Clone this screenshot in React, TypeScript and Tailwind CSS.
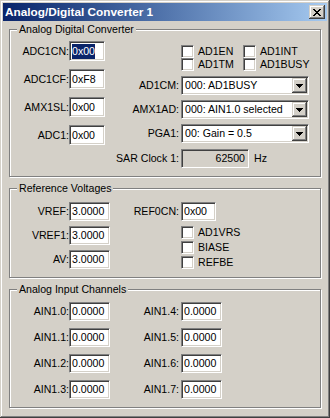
import React from "react";

const sunken =
  "border border-t-[#808080] border-l-[#808080] border-r-white border-b-white shadow-[inset_1px_1px_0_#404040,inset_-1px_-1px_0_#d4d0c8]";
const raised =
  "shadow-[inset_-1px_-1px_0_#404040,inset_1px_1px_0_#d4d0c8,inset_-2px_-2px_0_#808080,inset_2px_2px_0_#ffffff]";

function Field({
  size,
  value,
  selected,
}: {
  size: string;
  value: string;
  selected?: boolean;
}) {
  return (
    <div className={`${sunken} ${size} bg-white flex items-center pl-[2px] overflow-hidden whitespace-nowrap`}>
      {selected ? (
        <span className="bg-[#0a246a] text-white leading-[15px]">{value}</span>
      ) : (
        <span>{value}</span>
      )}
    </div>
  );
}

function Check({ label, width }: { label: string; width?: string }) {
  return (
    <div className={`flex items-center gap-[4px] h-[13px] ${width ?? ""}`}>
      <div className={`${sunken} w-[13px] h-[13px] bg-white shrink-0`} />
      <span className="whitespace-nowrap">{label}</span>
    </div>
  );
}

function Select({ value }: { value: string }) {
  return (
    <div className={`${sunken} w-[128px] h-[19px] bg-white flex items-stretch p-[1px]`}>
      <div className="flex-1 flex items-center pl-[2px] whitespace-nowrap overflow-hidden">{value}</div>
      <div className={`${raised} w-[15px] bg-[#d4d0c8] flex items-center justify-center`}>
        <svg width="7" height="4" viewBox="0 0 7 4" shapeRendering="crispEdges">
          <path d="M0 0h7v1H0zM1 1h5v1H1zM2 2h3v1H2zM3 3h1v1H3z" fill="#000" />
        </svg>
      </div>
    </div>
  );
}

function Group({
  title,
  className,
  children,
}: {
  title: string;
  className: string;
  children: React.ReactNode;
}) {
  return (
    <div
      className={`relative w-[312px] border border-[#808080] shadow-[inset_1px_1px_0_#ffffff,1px_1px_0_#ffffff] ${className}`}
    >
      <span className="absolute left-[7px] top-[-7px] px-[2px] bg-[#d4d0c8] leading-[13px] whitespace-nowrap">
        {title}
      </span>
      {children}
    </div>
  );
}

function LRow({
  label,
  children,
  h,
}: {
  label: string;
  children: React.ReactNode;
  h: string;
}) {
  return (
    <div className={`flex items-center ${h}`}>
      <div className="w-[59px] text-right whitespace-nowrap">{label}</div>
      {children}
    </div>
  );
}

function RRow({
  label,
  children,
  h,
}: {
  label: string;
  children: React.ReactNode;
  h: string;
}) {
  return (
    <div className={`flex items-center ${h}`}>
      <div className="w-[69px] text-right whitespace-nowrap mr-[2px]">{label}</div>
      {children}
    </div>
  );
}

export default function App() {
  return (
    <div className="w-[330px] h-[418px] bg-[#d4d0c8] p-[3px] shadow-[inset_-1px_-1px_0_#404040,inset_1px_1px_0_#d4d0c8,inset_-2px_-2px_0_#808080,inset_2px_2px_0_#ffffff] font-['Liberation_Sans',Arial,sans-serif] text-[10.6px] text-black leading-[13px]">
      <div className="h-[18px] bg-linear-to-r from-[#0a246a] to-[#a6caf0] flex items-center justify-between pl-[2px] pr-[2px]">
        <span className="text-white font-bold text-[11.8px] whitespace-nowrap">Analog/Digital Converter 1</span>
        <div className={`${raised} w-[16px] h-[14px] bg-[#d4d0c8] flex items-center justify-center`}>
          <svg width="8" height="7" viewBox="0 0 8 7" shapeRendering="crispEdges">
            <path
              d="M0 0h2v1H0zM6 0h2v1H6zM1 1h2v1H1zM5 1h2v1H5zM2 2h4v1H2zM3 3h2v1H3zM2 4h4v1H2zM1 5h2v1H1zM5 5h2v1H5zM0 6h2v1H0zM6 6h2v1H6z"
              fill="#000"
            />
          </svg>
        </div>
      </div>

      <div className="pl-[6px] pt-[8px] flex flex-col gap-[11px]">
        <Group title="Analog Digital Converter" className="h-[148px]">
          <div className="flex">
            <div className="w-[100px] flex flex-col gap-[8px] pt-[11px]">
              <LRow label="ADC1CN:" h="h-[20px]">
                <Field size="w-[36px] h-[20px]" value="0x00" selected />
              </LRow>
              <LRow label="ADC1CF:" h="h-[20px]">
                <Field size="w-[36px] h-[20px]" value="0xF8" />
              </LRow>
              <LRow label="AMX1SL:" h="h-[20px]">
                <Field size="w-[36px] h-[20px]" value="0x00" />
              </LRow>
              <LRow label="ADC1:" h="h-[20px]">
                <Field size="w-[36px] h-[20px]" value="0x00" />
              </LRow>
            </div>
            <div className="flex flex-col pt-[15px]">
              <div className="flex pl-[71px]">
                <Check label="AD1EN" width="w-[62px]" />
                <Check label="AD1INT" />
              </div>
              <div className="flex pl-[71px]">
                <Check label="AD1TM" width="w-[62px]" />
                <Check label="AD1BUSY" />
              </div>
              <div className="flex flex-col gap-[5px] mt-[5px]">
                <RRow label="AD1CM:" h="h-[19px]">
                  <Select value="000: AD1BUSY" />
                </RRow>
                <RRow label="AMX1AD:" h="h-[19px]">
                  <Select value="000: AIN1.0 selected" />
                </RRow>
                <RRow label="PGA1:" h="h-[19px]">
                  <Select value="00: Gain = 0.5" />
                </RRow>
              </div>
              <div className="mt-[6px]">
                <RRow label="SAR Clock 1:" h="h-[19px]">
                  <div className={`${sunken} w-[68px] h-[19px] bg-[#d4d0c8] flex items-center justify-end pr-[3px]`}>
                    62500
                  </div>
                  <span className="ml-[5px]">Hz</span>
                </RRow>
              </div>
            </div>
          </div>
        </Group>

        <Group title="Reference Voltages" className="h-[90px]">
          <div className="flex">
            <div className="w-[100px] flex flex-col gap-[5px] pt-[13px]">
              <LRow label="VREF:" h="h-[19px]">
                <Field size="w-[41px] h-[19px]" value="3.0000" />
              </LRow>
              <LRow label="VREF1:" h="h-[19px]">
                <Field size="w-[41px] h-[19px]" value="3.0000" />
              </LRow>
              <LRow label="AV:" h="h-[19px]">
                <Field size="w-[41px] h-[19px]" value="3.0000" />
              </LRow>
            </div>
            <div className="flex flex-col pt-[13px]">
              <RRow label="REF0CN:" h="h-[19px]">
                <Field size="w-[35px] h-[19px]" value="0x00" />
              </RRow>
              <div className="flex flex-col gap-[2px] mt-[5px] pl-[71px]">
                <Check label="AD1VRS" />
                <Check label="BIASE" />
                <Check label="REFBE" />
              </div>
            </div>
          </div>
        </Group>

        <Group title="Analog Input Channels" className="h-[119px]">
          <div className="flex">
            <div className="w-[100px] flex flex-col gap-[7px] pt-[12px]">
              {["AIN1.0:", "AIN1.1:", "AIN1.2:", "AIN1.3:"].map((l) => (
                <LRow key={l} label={l} h="h-[19px]">
                  <Field size="w-[41px] h-[19px]" value="0.0000" />
                </LRow>
              ))}
            </div>
            <div className="flex flex-col gap-[7px] pt-[12px]">
              {["AIN1.4:", "AIN1.5:", "AIN1.6:", "AIN1.7:"].map((l) => (
                <RRow key={l} label={l} h="h-[19px]">
                  <Field size="w-[41px] h-[19px]" value="0.0000" />
                </RRow>
              ))}
            </div>
          </div>
        </Group>
      </div>
    </div>
  );
}
